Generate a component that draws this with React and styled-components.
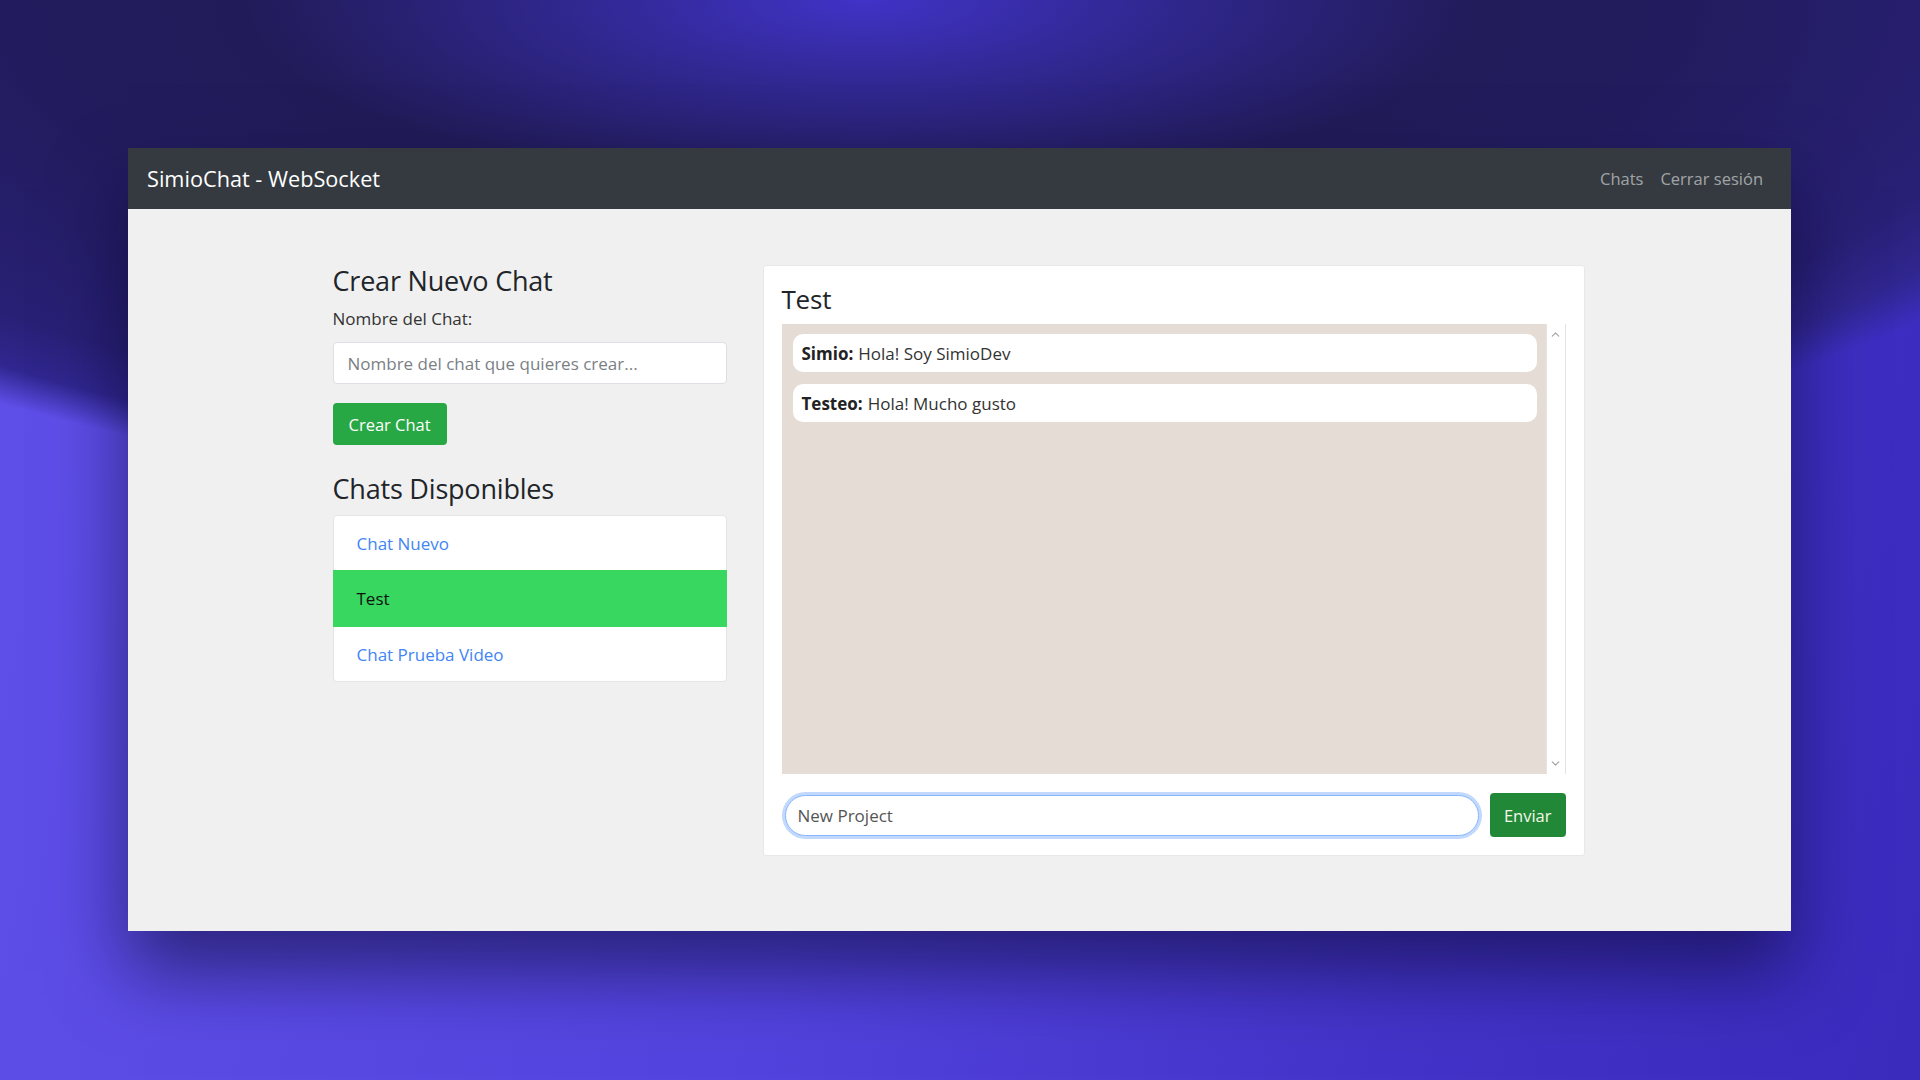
import React from "react";
import styled, { createGlobalStyle } from "styled-components";
import { ChevronUp, ChevronDown } from "lucide-react";

const GlobalStyle = createGlobalStyle`
  html, body { margin: 0; padding: 0; }
  body {
    width: 1920px;
    height: 1080px;
    overflow: hidden;
    font-family: "Open Sans", "Noto Sans", sans-serif;
    background:
      radial-gradient(ellipse 620px 190px at 45% 0%, rgba(66, 52, 206, 0.95), rgba(66, 52, 206, 0) 100%),
      radial-gradient(ellipse 1383px 510px at 44% 0%, #1e1a4b 0%, #221c5e 60%, #282075 86%, #30268f 94%, rgba(48, 38, 143, 0) 100%),
      linear-gradient(100deg, #6050ea 0%, #5243de 45%, #4333c8 75%, #3a2bbd 100%);
  }
  * { box-sizing: border-box; }
`;

const Stage = styled.div`
  padding: 148px 0 0 128px;
`;

const Window = styled.div`
  width: 1663px;
  height: 783px;
  display: flex;
  flex-direction: column;
  background: #f0f0f0;
  box-shadow: 0 40px 70px rgba(8, 6, 40, 0.55);
`;

const Navbar = styled.nav`
  height: 61px;
  flex: none;
  background: #343a40;
  display: flex;
  align-items: center;
  justify-content: space-between;
  padding: 0 28px 0 19px;
`;

const Brand = styled.span`
  color: #ffffff;
  font-size: 21.7px;
`;

const NavLinks = styled.div`
  display: flex;
  gap: 17px;
`;

const NavLink = styled.a`
  color: rgba(255, 255, 255, 0.55);
  font-size: 16.5px;
  text-decoration: none;
`;

const Main = styled.main`
  flex: 1;
  padding-top: 56px;
`;

const Container = styled.div`
  width: 1252px;
  margin: 0 auto;
  transform: translateX(-1px);
  display: grid;
  grid-template-columns: 394px 822px;
  column-gap: 36px;
  align-items: start;
`;

const Column = styled.div`
  display: flex;
  flex-direction: column;
`;

const Heading = styled.h3`
  margin: 0;
  font-size: ${(p) => p.$size || 27}px;
  font-weight: 500;
  line-height: 32px;
  color: #212529;
  letter-spacing: -0.2px;
`;

const Label = styled.label`
  display: block;
  margin: 10px 0 11px;
  font-size: 17px;
  line-height: 24px;
  color: #333;
`;

const TextInput = styled.input`
  height: 42px;
  width: 100%;
  border: 1px solid #dcdfe3;
  border-radius: 4px;
  padding: 0 14px;
  font-family: inherit;
  font-size: 17px;
  color: #495057;
  background: #fff;
  outline: none;
  &::placeholder { color: #7a7f85; }
`;

const Button = styled.button`
  height: ${(p) => p.$h || 42}px;
  padding: 0 ${(p) => p.$px || 14}px;
  border: none;
  border-radius: 4px;
  background: ${(p) => p.$bg || "#28a745"};
  color: ${(p) => p.$fg || "#fff"};
  font-family: inherit;
  font-size: 16.5px;
  cursor: pointer;
`;

const CreateButton = styled(Button)`
  align-self: flex-start;
  margin: 19px 0 28px;
`;

const ListGroup = styled.div`
  margin-top: 10px;
  background: #fff;
  border: 1px solid #e3e5e8;
  border-radius: 4px;
  display: flex;
  flex-direction: column;
`;

const ListItem = styled.a`
  height: ${(p) => (p.$active ? 57 : 55)}px;
  margin: ${(p) => (p.$active ? "-1px -1px -1px -1px" : "0")};
  display: flex;
  align-items: center;
  padding-left: ${(p) => (p.$active ? 24 : 23)}px;
  font-size: 17px;
  text-decoration: none;
  color: ${(p) => (p.$active ? "#111" : "#4285f4")};
  background: ${(p) => (p.$active ? "#37d760" : "transparent")};
  border-top: ${(p) => (p.$first || p.$active ? "none" : "1px solid #e3e5e8")};
  position: relative;
  z-index: ${(p) => (p.$active ? 1 : 0)};
`;

const Card = styled.div`
  background: #fff;
  border: 1px solid #e8e8e8;
  border-radius: 3px;
  padding: 17px 18px 18px;
  display: flex;
  flex-direction: column;
`;

const Messages = styled.div`
  margin-top: 9px;
  height: 450px;
  display: flex;
  background: #e5ddd5;
`;

const MessageList = styled.div`
  flex: 1;
  padding: 10px 9px 10px 11px;
  display: flex;
  flex-direction: column;
  gap: 12px;
`;

const Bubble = styled.div`
  height: 38px;
  display: flex;
  align-items: center;
  padding: 0 9px;
  background: #fff;
  border-radius: 10px;
  font-size: 17px;
  color: #333;
  b { font-weight: 700; color: #222; margin-right: 5px; }
`;

const ScrollTrack = styled.div`
  width: 20px;
  background: #fff;
  border-left: 1px solid #e4e4e4;
  border-right: 1px solid #e4e4e4;
  display: flex;
  flex-direction: column;
  justify-content: space-between;
  align-items: center;
  padding: 4px 0 4px;
  color: #a0a0a0;
`;

const InputRow = styled.div`
  margin-top: 19px;
  display: flex;
  align-items: center;
  gap: 11px;
  padding-left: 3px;
`;

const ChatInput = styled.input`
  flex: 1;
  height: 41px;
  border: 1px solid #86b7fe;
  border-radius: 21px;
  padding: 0 12px;
  font-family: inherit;
  font-size: 17px;
  color: #555;
  outline: none;
  box-shadow: 0 0 0 3px rgba(120, 170, 250, 0.45);
  caret-color: #222;
`;

export default function App() {
  return (
    <>
      <GlobalStyle />
      <Stage>
        <Window>
          <Navbar>
            <Brand>SimioChat - WebSocket</Brand>
            <NavLinks>
              <NavLink href="#">Chats</NavLink>
              <NavLink href="#">Cerrar sesión</NavLink>
            </NavLinks>
          </Navbar>
          <Main>
            <Container>
              <Column>
                <Heading>Crear Nuevo Chat</Heading>
                <Label htmlFor="chatname">Nombre del Chat:</Label>
                <TextInput id="chatname" placeholder="Nombre del chat que quieres crear..." />
                <CreateButton $px={16}>Crear Chat</CreateButton>
                <Heading>Chats Disponibles</Heading>
                <ListGroup>
                  <ListItem href="#" $first>Chat Nuevo</ListItem>
                  <ListItem href="#" $active>Test</ListItem>
                  <ListItem href="#">Chat Prueba Video</ListItem>
                </ListGroup>
              </Column>
              <Card>
                <Heading $size={26}>Test</Heading>
                <Messages>
                  <MessageList>
                    <Bubble><b>Simio:</b> Hola! Soy SimioDev</Bubble>
                    <Bubble><b>Testeo:</b> Hola! Mucho gusto</Bubble>
                  </MessageList>
                  <ScrollTrack>
                    <ChevronUp size={13} strokeWidth={2} />
                    <ChevronDown size={13} strokeWidth={2} />
                  </ScrollTrack>
                </Messages>
                <InputRow>
                  <ChatInput defaultValue="New Project" autoFocus />
                  <Button $h={44} $px={14} $bg="#218838" $fg="#f4f7e8">Enviar</Button>
                </InputRow>
              </Card>
            </Container>
          </Main>
        </Window>
      </Stage>
    </>
  );
}
